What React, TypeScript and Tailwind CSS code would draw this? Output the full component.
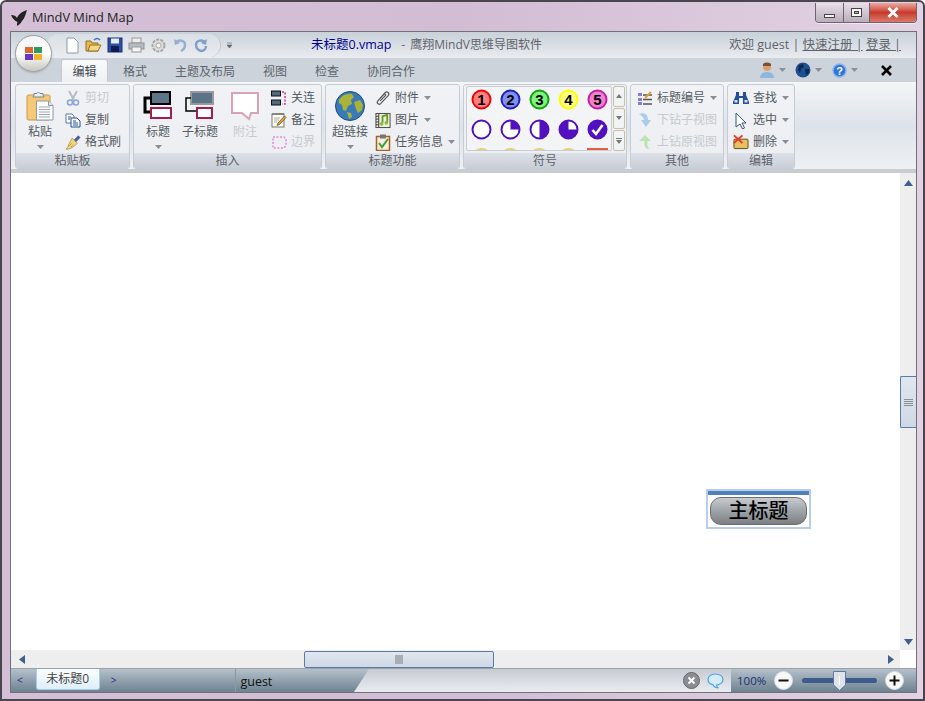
import React from 'react';

const Caret = ({ className = '' }: { className?: string }) => (
  <svg width="7" height="4" viewBox="0 0 7 4" className={className}><path d="M0 0h7L3.5 4z" fill="#8a8f96" /></svg>
);

function Paste() {
  return (
    <svg width="28" height="30" viewBox="0 0 28 30">
      <rect x="1" y="4" width="23" height="25" rx="1.5" fill="#f5c977" stroke="#c79a4c" />
      <path d="M8 4V2.500h3L12.500 1 14 2.500h3V4l1 2H7z" fill="#e8eef2" stroke="#7b8794" />
      <path d="M10.500 10h12l4.500 4.500V29H10.500z" fill="#fff" stroke="#8d99a6" />
      <path d="M22.500 10v4.500H27" fill="#dfe6ee" stroke="#8d99a6" />
      <path d="M13 16h11M13 18.500h11M13 21h11M13 23.500h11M13 26h11" stroke="#9aa6b2" />
    </svg>
  );
}

function Cut() {
  return (
    <svg width="14" height="16" viewBox="0 0 14 16">
      <path d="M3 1l5 9M11 1L6 10" stroke="#b4bcc6" strokeWidth="2" />
      <circle cx="4" cy="12.500" r="2.500" fill="none" stroke="#8ea6d8" strokeWidth="1.600" />
      <circle cx="10" cy="12.500" r="2.500" fill="none" stroke="#8ea6d8" strokeWidth="1.600" />
    </svg>
  );
}

function Copy() {
  return (
    <svg width="16" height="15" viewBox="0 0 16 15">
      <path d="M1 1h6l2 2v7H1z" fill="#fff" stroke="#5577a8" />
      <path d="M6 5h6l3 3v6H6z" fill="#fff" stroke="#1f4f95" />
      <path d="M8 8h3M8 10h5M8 12h5M3 4h3M3 6h2" stroke="#1f4f95" />
    </svg>
  );
}

function Brush() {
  return (
    <svg width="18" height="17" viewBox="0 0 18 17">
      <path d="M10 6l5-5 2 2-5 5z" fill="#4a5ea8" stroke="#2b3a78" strokeWidth=".6" />
      <path d="M8 3.500l6 6-3 2.500C8 15 4 16.500 1 16c2-1 2.500-3 3-5z" fill="#f2d67c" stroke="#9a8440" strokeWidth=".7" />
      <path d="M4 13l3.500-3.500M6.500 14l3-3" stroke="#b39a4a" />
    </svg>
  );
}

function TopicIcon({ sub = false }: { sub?: boolean }) {
  return (
    <svg width="30" height="29" viewBox="0 0 30 29">
      {sub ? (
        <>
          <rect x="6" y="1" width="22" height="12" fill="#5c7488" stroke="#9a9a9a" strokeWidth="2" />
          <path d="M6 7H1v13h11" fill="none" stroke="#000" strokeWidth="1.500" />
          <rect x="12" y="17" width="15" height="10" fill="#fff" stroke="#a31e4e" strokeWidth="2" />
        </>
      ) : (
        <>
          <rect x="8" y="1" width="19" height="12" fill="#5c7488" stroke="#000" strokeWidth="2" />
          <path d="M8 7H2v14h6" fill="none" stroke="#000" strokeWidth="3" />
          <rect x="8" y="17" width="20" height="10" fill="#fff" stroke="#a31e4e" strokeWidth="2" />
        </>
      )}
    </svg>
  );
}

function Callout() {
  return (
    <svg width="30" height="30" viewBox="0 0 30 30">
      <path d="M2 2h26v20H21l-2 6-7-6H2z" fill="#fff" stroke="#d9a3b6" strokeWidth="2" />
    </svg>
  );
}

function Relation() {
  return (
    <svg width="16" height="16" viewBox="0 0 16 16">
      <rect x="0.500" y="1" width="9" height="5" fill="#4f6a7e" stroke="#111" />
      <rect x="0.500" y="10" width="9" height="5" fill="#4f6a7e" stroke="#111" />
      <path d="M11 2h3v12h-3" fill="none" stroke="#c92ea8" strokeWidth="1.500" strokeDasharray="2 1.500" />
    </svg>
  );
}

function Note() {
  return (
    <svg width="16" height="16" viewBox="0 0 16 16">
      <rect x="1" y="2" width="12" height="13" fill="#fffef2" stroke="#777" />
      <path d="M2 1v2M4 1v2M6 1v2M8 1v2M10 1v2M12 1v2" stroke="#555" />
      <path d="M3 6h6M3 8h5M3 10h3" stroke="#aaa" />
      <path d="M13.500 4L15 5.500 8.500 12.500 6 13.500l1-2.500z" fill="#e3a53c" stroke="#5b4116" strokeWidth=".7" />
    </svg>
  );
}

function Boundary() {
  return (
    <svg width="15" height="13" viewBox="0 0 15 13">
      <path d="M1 1h11l2 2.500v6L12 12H1z" fill="none" stroke="#e58bd4" strokeWidth="1.500" strokeDasharray="2 1.500" />
    </svg>
  );
}

function Globe({ size = 30 }: { size?: number }) {
  return (
    <svg width={size} height={size} viewBox="0 0 30 30">
      <circle cx="15" cy="15" r="14.500" fill="#3a7ab8" stroke="#1e4c80" />
      <path d="M4 9c3-5 8-7 13-6l2 3-3 3 1 4-4 2-2 5-3-1-1-5-3-2zM19 11l6-2 3 5-1 5-4 3-2-4zM12 21l4 1 1 4-3 2z" fill="#a9b338" />
    </svg>
  );
}

function Clip() {
  return (
    <svg width="17" height="17" viewBox="0 0 17 17">
      <path d="M3.500 10.500l7-8c2.500-2.500 5.500 .5 3.500 3l-8 8.500c-1.500 1.500-5 0-3-3l6.500-7c1-1 2.500 .5 1.500 1.500L5.500 11" fill="none" stroke="#5a5a5a" strokeWidth="1.300" />
    </svg>
  );
}

function Film() {
  return (
    <svg width="17" height="17" viewBox="0 0 17 17">
      <rect x="1" y="1" width="15" height="15" fill="#f0f0e0" stroke="#444" />
      <path d="M4 1v15M1 4h3M1 7h3M1 10h3M1 13h3" stroke="#333" />
      <path d="M8 11V4l5-1.500V10" fill="none" stroke="#6a9c2c" strokeWidth="2" />
      <circle cx="7" cy="12" r="2" fill="#8cbc3c" />
      <circle cx="12" cy="11" r="2" fill="#8cbc3c" />
    </svg>
  );
}

function Task() {
  return (
    <svg width="16" height="17" viewBox="0 0 16 17">
      <rect x="1.500" y="2.500" width="13" height="14" fill="#f6efe0" stroke="#a8611c" strokeWidth="1.500" />
      <rect x="5" y="0.500" width="6" height="4" fill="#777" />
      <path d="M4 9l3 4 6-8" fill="none" stroke="#3f9b2c" strokeWidth="2" />
    </svg>
  );
}

function Numbered() {
  return (
    <svg width="16" height="15" viewBox="0 0 16 15">
      <rect x="1" y="2" width="4" height="3" fill="#8a7be0" />
      <rect x="1" y="7" width="4" height="3" fill="#8a7be0" />
      <rect x="1" y="11" width="4" height="3" fill="#8a7be0" />
      <path d="M6 4h9M6 8.500h9M6 13h9" stroke="#555" strokeWidth="1.400" />
      <path d="M8 7l6-6" stroke="#e0a030" strokeWidth="2" />
    </svg>
  );
}

function Drill({ up = false }: { up?: boolean }) {
  return up ? (
    <svg width="14" height="16" viewBox="0 0 14 16"><path d="M7 1l6 6H9.500v4c0 2 1 3 2 4-3 0-5-2-5-5V7H1z" fill="#bde2b4" /></svg>
  ) : (
    <svg width="14" height="16" viewBox="0 0 14 16"><path d="M1 2c6-2 9 1 9 6h3l-5 7-5-7h3c0-2-2-4-5-6z" fill="#a9cdec" /></svg>
  );
}

function Binoculars() {
  return (
    <svg width="16" height="14" viewBox="0 0 16 14">
      <path d="M3 1h3v4h4V1h3v3l3 7v2H10V7H6v6H0v-2l3-7z" fill="#24509a" />
      <rect x="1.500" y="9" width="3" height="2.500" fill="#cfe0f5" />
      <rect x="11.500" y="9" width="3" height="2.500" fill="#cfe0f5" />
    </svg>
  );
}

function Pointer() {
  return (
    <svg width="12" height="17" viewBox="0 0 12 17">
      <path d="M1 1l10 10H7l2.500 5-2 1L5 12l-4 3z" fill="#fff" stroke="#3b5578" />
    </svg>
  );
}

function DeleteIcon() {
  return (
    <svg width="17" height="16" viewBox="0 0 17 16">
      <rect x="1" y="5" width="15" height="10" rx="1" fill="#e8c060" stroke="#5b4a1c" />
      <path d="M1 1l9 8M10 1L1 9" stroke="#e53a28" strokeWidth="2" />
    </svg>
  );
}

function SmallBtn({ icon, label, disabled, caret }: { icon: React.ReactNode; label: string; disabled?: boolean; caret?: boolean }) {
  return (
    <div className="flex items-center h-[22px] whitespace-nowrap">
      <span className="flex justify-center shrink-0 w-[16px]">{icon}</span>
      <span className={`ml-[4px] ${disabled ? 'text-[#c6cacf]' : 'text-[#555b62]'}`}>{label}</span>
      {caret && <Caret className="ml-[5px]" />}
    </div>
  );
}

function LargeBtn({ icon, label, disabled, caret, width }: { icon: React.ReactNode; label: string; disabled?: boolean; caret?: boolean; width: string }) {
  return (
    <div className={`flex flex-col items-center pt-[5px] shrink-0 ${width}`}>
      <span className="h-[31px] flex items-center">{icon}</span>
      <span className={`mt-[2px] leading-[18px] whitespace-nowrap ${disabled ? 'text-[#c6cacf]' : 'text-[#555b62]'}`}>{label}</span>
      {caret && <Caret className="mt-[4px]" />}
    </div>
  );
}

function Group({ label, width, children }: { label: string; width: string; children: React.ReactNode }) {
  return (
    <div className={`shrink-0 h-[85px] flex flex-col rounded-[3px] border border-[#c6ccd3] bg-gradient-to-b from-[#f0f2f5] to-[#eceef2] overflow-hidden ${width}`}>
      <div className="h-[68px] flex">{children}</div>
      <div className="flex-1 bg-gradient-to-b from-[#dde2e9] to-[#c9ced7] text-center text-[#5e646b] leading-[15px]">{label}</div>
    </div>
  );
}

function Symbol({ fill, ring, n }: { fill: string; ring: string; n: string }) {
  return (
    <svg width="21" height="21" viewBox="0 0 21 21">
      <circle cx="10.500" cy="10.500" r="9" fill={fill} stroke={ring} strokeWidth="2" />
      <text x="10.500" y="16" textAnchor="middle" fontSize="15" fontWeight="700" fill="#000" fontFamily="Liberation Sans, sans-serif">{n}</text>
    </svg>
  );
}

function Pie({ d, check }: { d?: string; check?: boolean }) {
  const p = '#5310c0';
  return (
    <svg width="21" height="21" viewBox="0 0 21 21">
      <circle cx="10.500" cy="10.500" r="9" fill={check ? p : '#fff'} stroke={p} strokeWidth="2" />
      {d && <path d={d} fill={p} />}
      {check && <path d="M5.500 11l3.500 4 6.500-9" fill="none" stroke="#fff" strokeWidth="2.600" />}
    </svg>
  );
}

function Gallery() {
  return (
    <div className="flex gap-[1px] pl-[2px] pt-[1px]">
      <div className="w-[146px] h-[65px] border border-[#c9ced5] rounded-[2px] bg-[#f3f4f6] overflow-hidden flex flex-col items-center">
        <div className="flex gap-[8px] pt-[2px] shrink-0">
          <Symbol fill="#ff8080" ring="#f00000" n="1" />
          <Symbol fill="#8090f0" ring="#2020c0" n="2" />
          <Symbol fill="#80f080" ring="#10a010" n="3" />
          <Symbol fill="#ffff80" ring="#ffff00" n="4" />
          <Symbol fill="#f080d0" ring="#c020a0" n="5" />
        </div>
        <div className="flex gap-[8px] pt-[9px] shrink-0">
          <Pie />
          <Pie d="M10.500 10.500V1.500a9 9 0 0 1 9 9z" />
          <Pie d="M10.500 1.500a9 9 0 0 1 0 18z" />
          <Pie d="M10.500 10.500V1.500a9 9 0 1 0 9 9z" />
          <Pie check />
        </div>
        <div className="flex gap-[8px] pt-[8px] shrink-0">
          {[0, 1, 2, 3].map(i => (
            <span key={i} className="w-[21px] h-[21px] rounded-full border-2 border-[#e6cf78] bg-[#f8f0c0]" />
          ))}
          <span className="w-[21px] h-[21px] border-t-[3px] border-[#e06040] bg-[#f8e0d0]" />
        </div>
      </div>
      <div className="w-[12px] flex flex-col gap-[1px]">
        <ScrollBtn d="M1 4L4 0l3 4z" />
        <ScrollBtn d="M1 0h6L4 4z" />
        <ScrollBtn d="M1 0h6v1H1zM1 2h6L4 6z" />
      </div>
    </div>
  );
}

function ScrollBtn({ d }: { d: string }) {
  return (
    <div className="flex items-center justify-center rounded-[2px] border border-[#c9bfa8] bg-[#f2f3f5] h-[21px]">
      <svg width="8" height="6" viewBox="0 0 8 6"><path d={d} fill="#777" /></svg>
    </div>
  );
}

function AppButton() {
  return (
    <div className="absolute left-[13px] top-[33px] w-[37px] h-[37px] rounded-full border border-[#9aa0a8] bg-gradient-to-b from-[#f4f4f4] via-[#ffffff] to-[#c8c8c0] shadow-[0_1px_2px_#8888] flex items-center justify-center z-10">
      <div className="grid grid-cols-2 gap-[1px]">
        <span className="w-[8px] h-[6px] bg-[#e0662a]" />
        <span className="w-[8px] h-[6px] bg-[#2f9a60]" />
        <span className="w-[8px] h-[6px] bg-[#6a35c0]" />
        <span className="w-[8px] h-[6px] bg-[#f0b428]" />
      </div>
    </div>
  );
}

function QatIcons() {
  return (
    <div className="flex items-center gap-[5px]">
      <svg width="16" height="17" viewBox="0 0 16 17"><path d="M3 1h7l4 4v11H3z" fill="#fdfdfd" stroke="#8d9aa8" /></svg>
      <svg width="17" height="16" viewBox="0 0 17 16"><path d="M1 4h5l1 2h6v8H1z" fill="#e6b94e" stroke="#94712a" /><path d="M3 14l2-6h11l-3 6z" fill="#f5d77f" stroke="#94712a" /><path d="M9 3c2-2 4-2 6 0" stroke="#3d76bd" strokeWidth="1.500" fill="none" /></svg>
      <svg width="16" height="16" viewBox="0 0 16 16"><rect x="1" y="1" width="14" height="14" fill="#2d4fa8" stroke="#1a2f70" /><rect x="4" y="1.500" width="8" height="5" fill="#e8eef8" /><rect x="4" y="9" width="8" height="6" fill="#101c50" /></svg>
      <svg width="17" height="16" viewBox="0 0 17 16"><rect x="4" y="1" width="9" height="5" fill="#ececec" stroke="#999" /><rect x="1" y="6" width="15" height="6" fill="#b8bcc0" stroke="#8d9298" /><rect x="4" y="10" width="9" height="5" fill="#f4f4f4" stroke="#999" /></svg>
      <svg width="17" height="17" viewBox="0 0 17 17"><circle cx="8.500" cy="8.500" r="6" fill="#dcdcdc" stroke="#a8a8a8" strokeWidth="2" strokeDasharray="3 1.200" /><circle cx="8.500" cy="8.500" r="2.500" fill="#f2f2f2" stroke="#a8a8a8" /></svg>
      <svg width="16" height="16" viewBox="0 0 16 16"><path d="M4 6c2-4 9-3 9 2 0 3-2 5-4 6" fill="none" stroke="#93aed0" strokeWidth="2.400" /><path d="M2 2l1 6 5-2z" fill="#93aed0" /></svg>
      <svg width="16" height="16" viewBox="0 0 16 16"><path d="M12 6C10 2 3 3 3 8c0 3 2 5 5 6 3 0 5-2 5-5" fill="none" stroke="#7f9fca" strokeWidth="2.400" /><path d="M14 2l-1 6-5-2z" fill="#7f9fca" /></svg>
    </div>
  );
}

function TitleRow() {
  return (
    <div className="h-[26px] flex items-center bg-gradient-to-b from-[#c9d1d9] to-[#e9ecf0] text-[#5e646b]">
      <div className="ml-[36px] h-[23px] w-[174px] pl-[17px] rounded-full border-r border-[#c2c8cf] bg-gradient-to-b from-[#d9dfe5] to-[#e9ecf0] flex items-center shrink-0">
        <QatIcons />
      </div>
      <svg width="7" height="7" viewBox="0 0 7 7" className="ml-[5px] shrink-0"><path d="M1 1h5M1 3h5L3.500 6z" stroke="#666" fill="#666" strokeWidth=".6" /></svg>
      <div className="ml-[78px] whitespace-nowrap flex items-center">
        <span className="text-[#000090] text-[12.5px]">未标题0.vmap</span>
        <span className="ml-[10px] text-[12px]">-</span>
        <span className="ml-[5px] text-[12px]">鹰翔MindV思维导图软件</span>
      </div>
      <div className="ml-auto mr-[15px] whitespace-nowrap text-[12.5px]">
        欢迎 guest | <span className="underline">快速注册 |</span> <span className="underline">登录 |</span>
      </div>
    </div>
  );
}

function Tab({ label, margin }: { label: string; margin: string }) {
  return <span className={`whitespace-nowrap text-[#5e646b] pt-[3px] ${margin}`}>{label}</span>;
}

function TabRow() {
  return (
    <div className="h-[24px] flex items-center bg-[#cdd3db] shrink-0">
      <div className="ml-[50px] h-[23px] self-end w-[47px] rounded-t-[3px] border border-b-0 border-[#c3c9d0] bg-gradient-to-b from-[#f8f9fa] to-[#eef0f3] text-center leading-[24px] text-[#44494f]">编辑</div>
      <Tab label="格式" margin="ml-[15px]" />
      <Tab label="主题及布局" margin="ml-[28px]" />
      <Tab label="视图" margin="ml-[28px]" />
      <Tab label="检查" margin="ml-[28px]" />
      <Tab label="协同合作" margin="ml-[28px]" />
      <div className="ml-auto flex items-center mr-[24px]">
        <svg width="14" height="17" viewBox="0 0 14 17"><circle cx="7" cy="5" r="4" fill="#d8a070" /><path d="M3 2c2-2 6-2 8 0v2H3z" fill="#7a5230" /><path d="M0 16c0-4 3-6 7-6s7 2 7 6z" fill="#8fb8e0" /></svg>
        <Caret className="ml-[5px]" />
        <span className="ml-[9px] flex"><svg width="16" height="16" viewBox="0 0 16 16"><circle cx="8" cy="8" r="7.500" fill="#1e4f8e" /><path d="M4 3l4-1 1 3-3 2-1 4-2-3zM10 7l4 0 0 4-3 2z" fill="#0d2a55" /></svg></span>
        <Caret className="ml-[4px]" />
        <span className="ml-[10px] flex"><svg width="15" height="15" viewBox="0 0 15 15"><circle cx="7.500" cy="7.500" r="6.500" fill="#2f74d8" stroke="#8ab4ee" strokeWidth="1.500" /><text x="7.500" y="11.500" textAnchor="middle" fontSize="11" fontWeight="700" fill="#fff" fontFamily="Liberation Sans, sans-serif">?</text></svg></span>
        <Caret className="ml-[4px]" />
        <svg width="11" height="11" viewBox="0 0 11 11" className="ml-[23px]"><path d="M1 1l9 9M10 1l-9 9" stroke="#000" strokeWidth="2.600" /></svg>
      </div>
    </div>
  );
}

function Ribbon() {
  return (
    <div className="h-[88px] shrink-0 flex gap-[3px] pl-[4px] pt-[2px] bg-gradient-to-b from-[#f4f6f8] via-[#dde3ea] to-[#eef1f4] border-b border-[#c8cdd3]">
      <Group label="粘贴板" width="w-[115px]">
        <LargeBtn icon={<Paste />} label="粘贴" caret width="w-[48px]" />
        <div className="pt-[2px] pl-[1px]">
          <SmallBtn icon={<Cut />} label="剪切" disabled />
          <SmallBtn icon={<Copy />} label="复制" />
          <SmallBtn icon={<Brush />} label="格式刷" />
        </div>
      </Group>
      <Group label="插入" width="w-[189px]">
        <LargeBtn icon={<TopicIcon />} label="标题" caret width="w-[48px]" />
        <LargeBtn icon={<TopicIcon sub />} label="子标题" width="w-[36px]" />
        <LargeBtn icon={<Callout />} label="附注" disabled width="w-[54px]" />
        <div className="pt-[2px] -ml-[1px]">
          <SmallBtn icon={<Relation />} label="关连" />
          <SmallBtn icon={<Note />} label="备注" />
          <SmallBtn icon={<Boundary />} label="边界" disabled />
        </div>
      </Group>
      <Group label="标题功能" width="w-[135px]">
        <LargeBtn icon={<Globe />} label="超链接" caret width="w-[48px]" />
        <div className="pt-[2px] pl-[1px]">
          <SmallBtn icon={<Clip />} label="附件" caret />
          <SmallBtn icon={<Film />} label="图片" caret />
          <SmallBtn icon={<Task />} label="任务信息" caret />
        </div>
      </Group>
      <Group label="符号" width="w-[164px]">
        <Gallery />
      </Group>
      <Group label="其他" width="w-[94px]">
        <div className="pt-[2px] pl-[6px]">
          <SmallBtn icon={<Numbered />} label="标题编号" caret />
          <SmallBtn icon={<Drill />} label="下钻子视图" disabled />
          <SmallBtn icon={<Drill up />} label="上钻原视图" disabled />
        </div>
      </Group>
      <Group label="编辑" width="w-[68px]">
        <div className="pt-[2px] pl-[5px]">
          <SmallBtn icon={<Binoculars />} label="查找" caret />
          <SmallBtn icon={<Pointer />} label="选中" caret />
          <SmallBtn icon={<DeleteIcon />} label="删除" caret />
        </div>
      </Group>
    </div>
  );
}

function Canvas() {
  return (
    <div className="flex-1 flex flex-col min-h-0">
      <div className="flex-1 flex min-h-0">
        <div className="flex-1 relative bg-white">
          <div className="absolute left-[695px] top-[316px] w-[105px] h-[40px] border-2 border-[#b8cdea] bg-white px-[2px]">
            <div className="absolute left-0 right-0 top-0 h-[4px] bg-[#4f81bd]" />
            <div className="mt-[6px] h-[28px] rounded-[11px] border border-[#6e6e6e] bg-gradient-to-b from-[#c8ccd0] via-[#9ea3a8] to-[#7c8085] text-center text-[20px] leading-[25px] font-medium text-black">主标题</div>
          </div>
        </div>
        <div className="w-[16px] bg-[#eeeeee] flex flex-col items-center pt-[7px] pb-[5px]">
          <svg width="9" height="6" viewBox="0 0 9 6"><path d="M0 6l4.500-6L9 6z" fill="#3f5f8f" /></svg>
          <div className="mt-[190px] w-full h-[52px] rounded-l-[2px] border border-r-0 border-[#5b7aa8] bg-gradient-to-b from-[#dfe6ee] to-[#cfd9e5] flex flex-col justify-center items-center gap-[1px]">
            <span className="w-[9px] h-[1px] bg-[#8a8f96]" />
            <span className="w-[9px] h-[1px] bg-[#8a8f96]" />
            <span className="w-[9px] h-[1px] bg-[#8a8f96]" />
            <span className="w-[9px] h-[1px] bg-[#8a8f96]" />
          </div>
          <svg width="9" height="6" viewBox="0 0 9 6" className="mt-auto"><path d="M0 0l4.500 6L9 0z" fill="#3f5f8f" /></svg>
        </div>
      </div>
      <div className="h-[18px] flex shrink-0">
        <div className="flex-1 bg-[#eeeeee] flex items-center pl-[8px] pr-[6px]">
          <svg width="6" height="9" viewBox="0 0 6 9"><path d="M6 0L0 4.500 6 9z" fill="#3f5f8f" /></svg>
          <div className="ml-[279px] w-[190px] h-[17px] rounded-[2px] border border-[#5b7aa8] bg-gradient-to-b from-[#dfe6ee] to-[#cfd9e5] flex items-center justify-center">
            <span className="w-[8px] h-[9px] bg-[#a9aeb4]" />
          </div>
          <svg width="6" height="9" viewBox="0 0 6 9" className="ml-auto"><path d="M0 0l6 4.500L0 9z" fill="#3f5f8f" /></svg>
        </div>
        <div className="w-[16px] bg-white" />
      </div>
    </div>
  );
}

function StatusBar() {
  return (
    <div className="h-[24px] shrink-0 flex items-stretch border-t border-[#9aa3ab] bg-gradient-to-b from-[#b4c1cb] to-[#6f8291] relative">
      <div className="w-[343px] shrink-0 flex items-center relative">
        <span className="ml-[6px] text-[10px] text-[#1a2f90]">&lt;</span>
        <div className="ml-[13px] w-[64px] h-[21px] self-start rounded-b-[3px] border border-t-0 border-[#a8cdea] bg-gradient-to-b from-[#fbfdfe] to-[#dfeefa] text-center leading-[20px] text-[#444]">未标题0</div>
        <span className="ml-[11px] text-[10px] text-[#1a2f90]">&gt;</span>
        <div className="ml-[119px] h-full w-[1px] bg-[#8d9aa5]" />
        <span className="ml-[4px] text-[12.5px] text-[#111] leading-[22px] mt-[2px]">guest</span>
      </div>
      <div className="w-[377px] shrink-0 bg-gradient-to-b from-[#c7cbd1] via-[#d8dce2] to-[#e9ebf0] [clip-path:polygon(15px_0,100%_0,100%_100%,0_100%)] flex items-center justify-end pr-[7px] gap-[7px]">
        <svg width="17" height="17" viewBox="0 0 17 17"><circle cx="8.500" cy="8.500" r="8" fill="#8a8d90" stroke="#666" /><path d="M5.500 5.500l6 6M11.500 5.500l-6 6" stroke="#fff" strokeWidth="2" /></svg>
        <svg width="17" height="16" viewBox="0 0 17 16"><path d="M8.500 1C13 1 16 3.500 16 6.500S13 12 9.500 12c0 1.500 1 2.500 2 3-2 0-4.500-1-5.500-3.200C3 11 1 9 1 6.500 1 3.500 4 1 8.500 1z" fill="#d4ebfb" stroke="#4ea3e0" strokeWidth="1.200" /></svg>
      </div>
      <div className="flex-1 flex items-center pl-[6px] relative">
        <span className="text-[11.500px] text-[#1a2f70]">100%</span>
        <svg width="19" height="19" viewBox="0 0 19 19" className="ml-[8px] shrink-0"><circle cx="9.500" cy="9.500" r="9" fill="#f8f8f8" stroke="#d8dde2" /><path d="M4.500 9.500h10" stroke="#111" strokeWidth="2" /></svg>
        <div className="ml-[9px] w-[75px] h-[5px] rounded-full bg-[#3d5c8c] relative shrink-0">
          <svg width="13" height="20" viewBox="0 0 13 20" className="absolute left-[31px] top-[-7px]"><path d="M.5.500h12V14L6.500 19.500.5 14z" fill="#e0e4e8" stroke="#5b7aa8" /><path d="M6.500 5v9" stroke="#fff" /></svg>
        </div>
        <svg width="19" height="19" viewBox="0 0 19 19" className="ml-[8px] shrink-0"><circle cx="9.500" cy="9.500" r="9" fill="#f8f8f8" stroke="#d8dde2" /><path d="M4.500 9.500h10M9.500 4.500v10" stroke="#111" strokeWidth="2" /></svg>
      </div>
    </div>
  );
}

function WinButtons() {
  return (
    <div className="absolute right-[6px] top-[1px] flex h-[20px] rounded-b-[4px] overflow-hidden border border-t-0 border-[#6d6470] shadow-[0_1px_0_#fff8]">
      <div className="w-[28px] flex items-center justify-center bg-gradient-to-b from-[#e8dfe8] to-[#b9adb9] border-r border-[#6d6470]">
        <span className="w-[11px] h-[4px] mt-[6px] bg-[#f6f6f6] border border-[#444]" />
      </div>
      <div className="w-[26px] flex items-center justify-center bg-gradient-to-b from-[#e8dfe8] to-[#b9adb9] border-r border-[#6d6470]">
        <span className="w-[11px] h-[9px] border border-[#444] bg-[#f6f6f6] p-[2px]"><span className="block w-full h-full bg-[#b9adb9] border border-[#444]" /></span>
      </div>
      <div className="w-[46px] flex items-center justify-center bg-gradient-to-b from-[#e8a9a0] via-[#c8392c] to-[#d87a6c]">
        <svg width="12" height="11" viewBox="0 0 12 11"><path d="M1.500 1l9 9M10.500 1l-9 9" stroke="#fff" strokeWidth="2.800" /></svg>
      </div>
    </div>
  );
}

export default function App() {
  return (
    <div className="w-[925px] h-[701px] relative overflow-hidden rounded-t-[6px] border-2 border-[#4a4650] bg-gradient-to-r from-[#d4bfd6] via-[#d2bdd4] to-[#e2d2e2] text-[12px] [font-family:'Open_Sans','Noto_Sans_CJK_SC',sans-serif] flex flex-col pl-[8px] pr-[6px] pt-[29px] pb-[6px]">
      <div className="absolute left-[9px] top-[6px] flex items-center">
        <svg width="17" height="16" viewBox="0 0 17 16"><path d="M0 5c3 0 5 1 6 3 1-3 4-6 10-8-1 3-2 8-5 11-1 2-3 4-5 5 0-2 0-3 .500-4C4 11 1 8 0 5z" fill="#222" /></svg>
        <span className="ml-[4px] text-[12.800px] text-[#222]">MindV Mind Map</span>
      </div>
      <WinButtons />
      <AppButton />
      <div className="flex-1 min-h-0 flex flex-col border border-[#6f7378] bg-white">
        <TitleRow />
        <TabRow />
        <Ribbon />
        <div className="h-[3px] shrink-0 bg-[#c9cdd2]" />
        <Canvas />
        <StatusBar />
      </div>
    </div>
  );
}
